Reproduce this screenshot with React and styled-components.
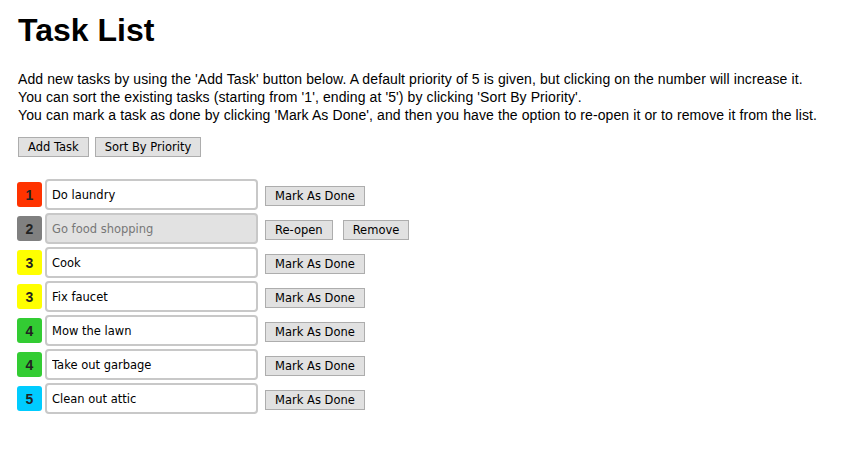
import React, { useState } from 'react'
import styled, { createGlobalStyle } from 'styled-components'

const GlobalStyle = createGlobalStyle`
  body {
    margin: 0;
    background: #fff;
    font-family: "Liberation Sans", Arial, sans-serif;
    color: #000;
  }
`

const Page = styled.main`
  padding: 12px 18px 18px;
`

const Title = styled.h1`
  font-size: 32px;
  font-weight: bold;
  margin: 0;
  line-height: 37px;
`

const Intro = styled.p`
  font-size: 14px;
  line-height: 18px;
  letter-spacing: 0.1px;
  margin: 21px 0 13px;
`

const Toolbar = styled.div`
  display: flex;
  gap: 6px;
  margin-bottom: 22px;
`

const Button = styled.button`
  font-family: "DejaVu Sans", Tahoma, sans-serif;
  font-size: 11.5px;
  color: #000;
  background: #e1e1e1;
  border: 1px solid #adadad;
  border-radius: 0;
  height: 20px;
  padding: 0 9px;
  line-height: 18px;
  cursor: pointer;
`

const List = styled.ul`
  list-style: none;
  margin: 0;
  padding: 0;
  display: flex;
  flex-direction: column;
  gap: 3px;
`

const Row = styled.li`
  display: flex;
  align-items: center;
`

const Badge = styled.span`
  width: 25px;
  height: 25px;
  border-radius: 3px;
  background: ${p => p.$color};
  color: #222;
  font-weight: bold;
  font-size: 14px;
  display: flex;
  align-items: center;
  justify-content: center;
  margin-left: -1px;
  margin-right: 3px;
  cursor: pointer;
`

const TaskInput = styled.input`
  width: 213px;
  height: 31px;
  box-sizing: border-box;
  border: 2px solid #c8c8c8;
  border-radius: 4px;
  padding: 0 5px;
  font-family: "DejaVu Sans", Tahoma, sans-serif;
  font-size: 11.5px;
  color: ${p => (p.$done ? '#777' : '#000')};
  background: ${p => (p.$done ? '#e2e2e2' : '#fff')};
  outline: none;
`

const Actions = styled.div`
  display: flex;
  gap: 10px;
  margin-left: 7px;
  padding-top: 3px;
`

const colors = {
  1: '#ff3300',
  2: '#808080',
  3: '#ffff00',
  4: '#33cc33',
  5: '#00ccff',
}

const initialTasks = [
  { id: 1, priority: 1, text: 'Do laundry', done: false },
  { id: 2, priority: 2, text: 'Go food shopping', done: true },
  { id: 3, priority: 3, text: 'Cook', done: false },
  { id: 4, priority: 3, text: 'Fix faucet', done: false },
  { id: 5, priority: 4, text: 'Mow the lawn', done: false },
  { id: 6, priority: 4, text: 'Take out garbage', done: false },
  { id: 7, priority: 5, text: 'Clean out attic', done: false },
]

export default function App() {
  const [tasks, setTasks] = useState(initialTasks)

  function update(id, change) {
    setTasks(tasks.map(t => (t.id === id ? { ...t, ...change } : t)))
  }

  function addTask() {
    setTasks([...tasks, { id: Date.now(), priority: 5, text: '', done: false }])
  }

  function sortTasks() {
    setTasks([...tasks].sort((a, b) => a.priority - b.priority))
  }

  return (
    <Page>
      <GlobalStyle />
      <Title>Task List</Title>
      <Intro>
        Add new tasks by using the 'Add Task' button below. A default priority of 5 is given, but clicking on the number will increase it.
        <br />
        You can sort the existing tasks (starting from '1', ending at '5') by clicking 'Sort By Priority'.
        <br />
        You can mark a task as done by clicking 'Mark As Done', and then you have the option to re-open it or to remove it from the list.
      </Intro>
      <Toolbar>
        <Button onClick={addTask}>Add Task</Button>
        <Button onClick={sortTasks}>Sort By Priority</Button>
      </Toolbar>
      <List>
        {tasks.map(task => (
          <Row key={task.id}>
            <Badge
              $color={colors[task.priority]}
              onClick={() => update(task.id, { priority: task.priority >= 5 ? 1 : task.priority + 1 })}
            >
              {task.priority}
            </Badge>
            <TaskInput
              $done={task.done}
              disabled={task.done}
              value={task.text}
              onChange={e => update(task.id, { text: e.target.value })}
            />
            <Actions>
              {task.done ? (
                <>
                  <Button onClick={() => update(task.id, { done: false })}>Re-open</Button>
                  <Button onClick={() => setTasks(tasks.filter(t => t.id !== task.id))}>Remove</Button>
                </>
              ) : (
                <Button onClick={() => update(task.id, { done: true })}>Mark As Done</Button>
              )}
            </Actions>
          </Row>
        ))}
      </List>
    </Page>
  )
}
